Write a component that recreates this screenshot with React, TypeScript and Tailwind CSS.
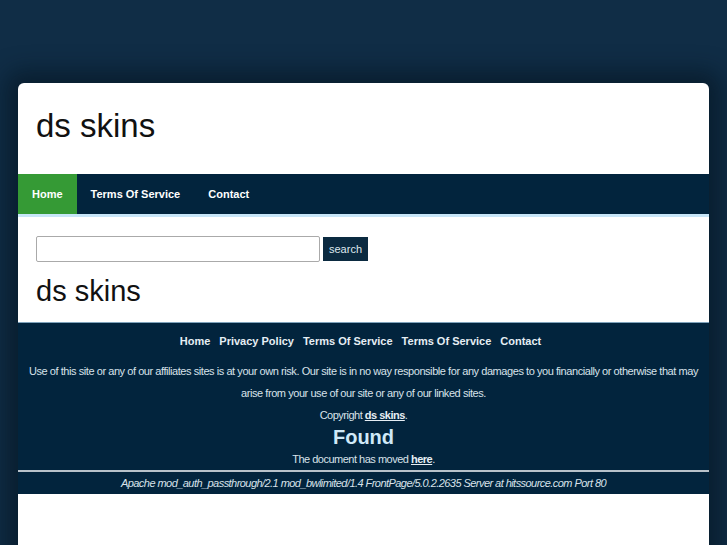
import React from "react";

export default function App() {
  return (
    <div className="min-h-[545px] bg-[#102d46] pt-[83px] px-[18px] overflow-hidden" style={{ fontFamily: '"Liberation Sans", Arial, sans-serif' }}>
      <div className="bg-white rounded-t-[6px] shadow-[0_0_22px_12px_rgba(4,18,30,0.55)]">
        <div className="h-[91px] px-[18px] pt-[23px]">
          <h1 className="text-[33px] leading-[40px] text-[#111]">ds skins</h1>
        </div>
        <nav className="h-[43px] bg-[#02243d] border-b-[3px] border-[#c7e6f8] flex text-[11px] font-bold text-white">
          <a className="bg-[#359a35] px-[14px] flex items-center">Home</a>
          <a className="px-[14px] flex items-center">Terms Of Service</a>
          <a className="px-[14px] flex items-center">Contact</a>
        </nav>
        <div className="h-[105px] px-[18px] pt-[19px]">
          <div className="flex items-center gap-[3px]">
            <input className="w-[284px] h-[26px] border border-[#aaa] rounded-[2px]" />
            <button className="h-[24px] px-[6px] bg-[#0b2a40] text-[#dfe8ee] text-[11px]">search</button>
          </div>
          <div className="text-[29px] leading-[32px] text-[#111] mt-[13px]">ds skins</div>
        </div>
        <footer className="bg-[#02243d] border-t border-[#7fa3bc] text-center text-[#d8e2ea]">
          <div className="pt-[10px] h-[26px] text-[11px] font-bold text-[#e6eef4] flex justify-center gap-[9px] pr-[6px]">
            <a>Home</a>
            <a>Privacy Policy</a>
            <a>Terms Of Service</a>
            <a>Terms Of Service</a>
            <a>Contact</a>
          </div>
          <p className="text-[11px] leading-[22px] tracking-[-0.44px] px-[8px] pt-[11px]">
            Use of this site or any of our affiliates sites is at your own risk. Our site is in no way responsible for any damages to you financially or otherwise that may arise from your use of our site or any of our linked sites.
          </p>
          <p className="text-[11px] leading-[22px] tracking-[-0.5px]">
            Copyright <a className="font-bold underline text-[#e6eef4]">ds skins</a>.
          </p>
          <h2 className="text-[20px] leading-[22px] font-bold text-[#cfe9f8]">Found</h2>
          <p className="text-[11px] leading-[22px] tracking-[-0.5px]">
            The document has moved <a className="font-bold underline text-[#e6eef4]">here</a>.
          </p>
          <hr className="border-0 border-t-[2px] border-[#b8c2ca]" />
          <address className="text-[11px] leading-[22px] italic tracking-[-0.55px]">
            Apache mod_auth_passthrough/2.1 mod_bwlimited/1.4 FrontPage/5.0.2.2635 Server at hitssource.com Port 80
          </address>
        </footer>
        <div className="h-[60px]" />
      </div>
    </div>
  );
}
